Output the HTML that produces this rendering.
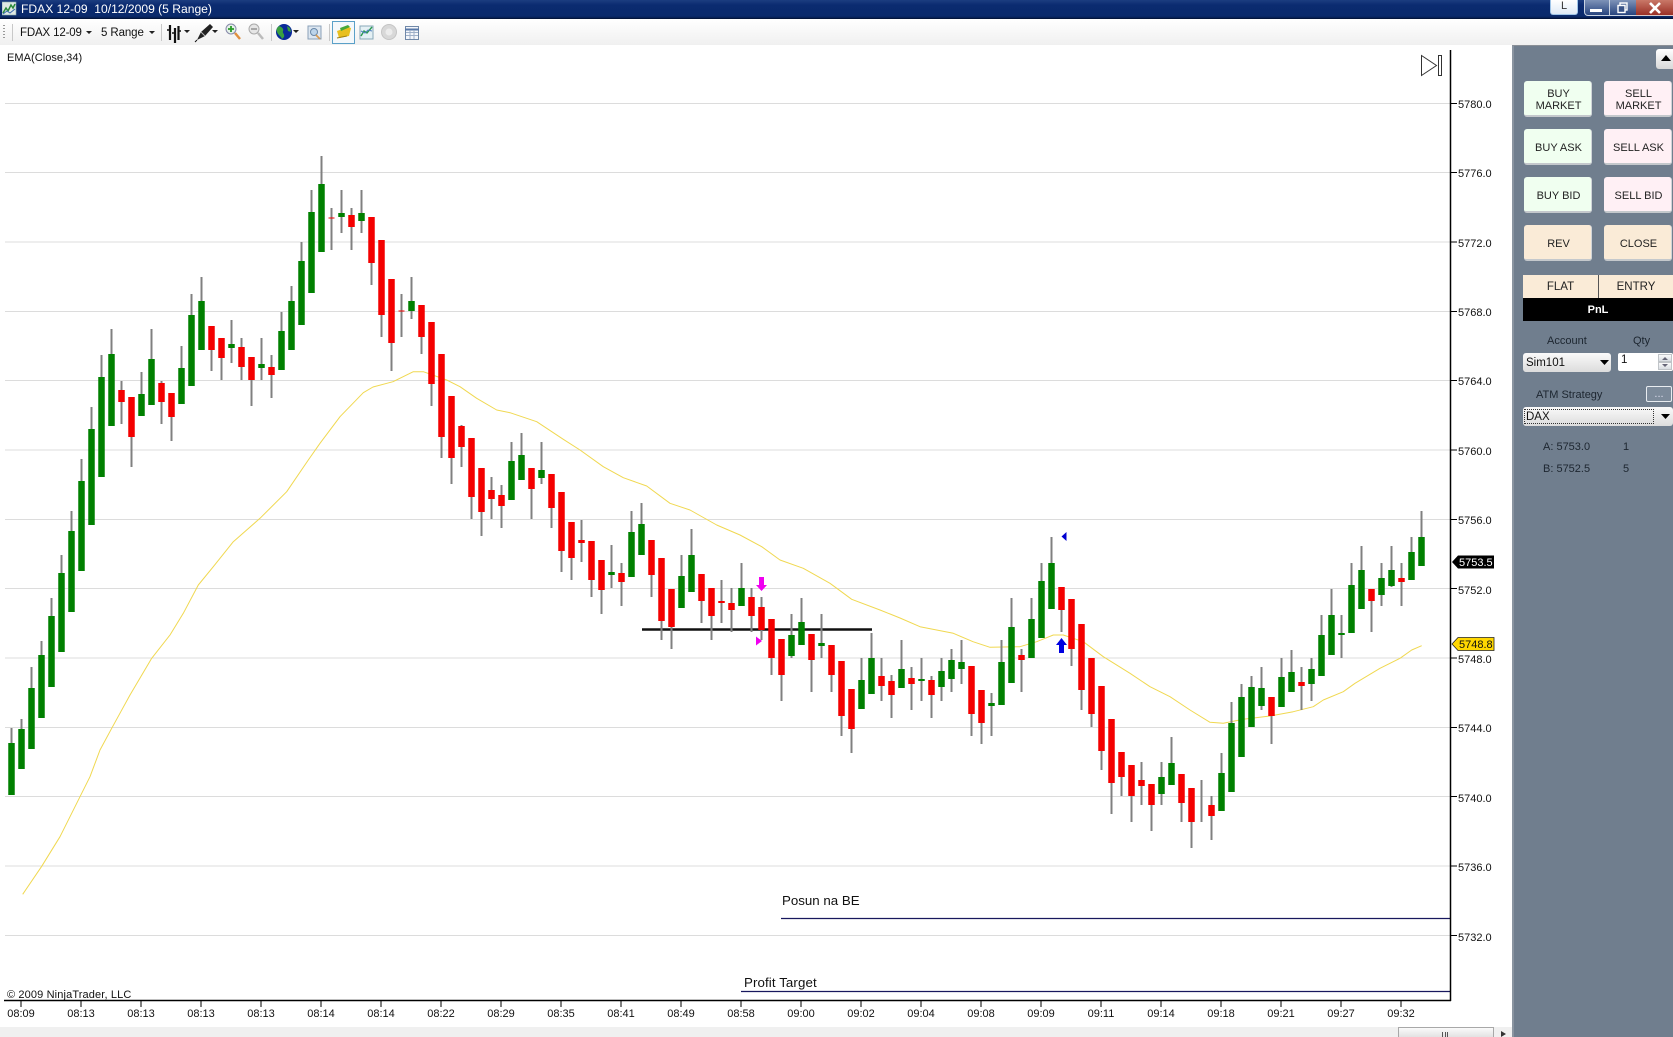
<!DOCTYPE html>
<html><head><meta charset="utf-8"><title>FDAX 12-09</title>
<style>
html,body{margin:0;padding:0;width:1673px;height:1037px;overflow:hidden;background:#fff;font-family:"Liberation Sans",sans-serif;font-size:11px;color:#111}
.a{position:absolute;box-sizing:border-box;white-space:nowrap}
.title{left:0;top:0;width:1673px;height:19px;background:linear-gradient(#1c3d80 0,#0b2b70 5px,#0a2a6c 16px,#041c50 18px);border-bottom:1px solid #03153c}
.tb{left:0;top:19px;width:1512px;height:26px;background:linear-gradient(#fff,#f0f0f0)}
.tbr{left:1512px;top:19px;width:161px;height:26px;background:linear-gradient(#fff,#f0f0f0)}
.panel{left:1512px;top:45px;width:161px;height:992px;background:#707e8e;border-left:2px solid #8a94a0;border-top:1px solid #8a8f96}
.btn{width:68px;height:36px;border-radius:3px;text-align:center;font-size:11px;line-height:12px;display:flex;align-items:center;justify-content:center;border-bottom:2px solid #c4c8cc;border-right:1px solid #d0d4d8;color:#222;white-space:normal;padding:3px 0 0 2px}
.g{background:#f0fff0}.r{background:#fff0f5}.o{background:#faebd7}
.pt{color:#1d2630;font-size:11px}
.bot{left:0;top:1027px;width:1512px;height:10px;background:#f0f0f0}
</style></head><body>

<div class="a title"></div>
<svg class="a" style="left:2px;top:1px" width="15" height="15"><rect x="0" y="1" width="14" height="13" fill="#dfe9e4" stroke="#8aa" stroke-width=".6"/><path d="M1 12 4 7l2 3 3-6 2 3 2-4" fill="none" stroke="#2a8a3a" stroke-width="1.5"/><path d="M1 13 5 10l3 2 5-4" fill="none" stroke="#3a6ab0" stroke-width="1"/></svg>
<div class="a" style="left:21px;top:2px;color:#fff;font-size:12.1px;line-height:15px">FDAX 12-09&nbsp; 10/12/2009 (5 Range)</div>

<div class="a" style="left:1550px;top:0;width:28px;height:15px;background:linear-gradient(#fff,#dfeaf6);border:1px solid #9fc4e8;border-top:0;border-radius:0 0 3px 3px;text-align:center;font-size:11px;line-height:13px;color:#333">L</div>
<div class="a" style="left:1584px;top:0;width:26px;height:16px;background:linear-gradient(#7e93b8,#27447e);border:1px solid #c9d3e2;border-top:0;border-radius:0 0 0 4px"></div>
<div class="a" style="left:1590px;top:9px;width:12px;height:3px;background:#fff"></div>
<div class="a" style="left:1610px;top:0;width:26px;height:16px;background:linear-gradient(#7e93b8,#27447e);border-bottom:1px solid #c9d3e2"></div>
<svg class="a" style="left:1617px;top:2px" width="12" height="12"><rect x="3" y="1" width="7" height="7" fill="none" stroke="#fff" stroke-width="1.4"/><rect x="1" y="3.5" width="7" height="7" fill="#3a5488" stroke="#fff" stroke-width="1.4"/></svg>
<div class="a" style="left:1636px;top:0;width:37px;height:16px;background:linear-gradient(#c97868,#9a3026);border-bottom:1px solid #d8c8c8"></div>
<svg class="a" style="left:1648px;top:2px" width="14" height="12"><path d="M2 1 12 11M12 1 2 11" stroke="#fff" stroke-width="2.6"/></svg>

<div class="a tb"></div><div class="a tbr"></div>
<svg class="a" style="left:0;top:19px" width="460" height="26">
<path d="M4 6v1M4 9v1M4 12v1M4 15v1M4 18v1" stroke="#999" stroke-width="2"/>
<path d="M12.5 5V22M161.5 5V22M271.5 5V22M329.5 5V22" stroke="#c8c8c8"/>
<text x="20" y="17" font-size="11.5" letter-spacing="-.15" fill="#111" font-family="Liberation Sans">FDAX 12-09</text>
<text x="101" y="17" font-size="11.5" letter-spacing="-.1" fill="#111" font-family="Liberation Sans">5 Range</text>
<path d="M86 12h6l-3 3zM149 12h6l-3 3zM184 11h6l-3 3zM212 11h6l-3 3zM293 11h6l-3 3z" fill="#222"/>
<path d="M170 6V21M175 9V24M178.500 7V21" stroke="#111" stroke-width="2.200"/><path d="M167 11h3M172 14h3M178 12h3" stroke="#111" stroke-width="1.500"/>
<path d="M197 21 201 13 210 5l3 3-8 9z" fill="#222"/><path d="M195 23 197 21" stroke="#111"/><path d="M201 13l4 4" stroke="#bbb"/>
<circle cx="231" cy="10" r="5" fill="#e4f2e8" stroke="#88a" stroke-width="1"/><path d="M231 7v6M228 10h6" stroke="#2a9a2a" stroke-width="1.800"/><path d="M235 14 240 20" stroke="#e09040" stroke-width="2.500"/>
<circle cx="254" cy="10" r="5" fill="#e6e6e6" stroke="#aaa" stroke-width="1"/><path d="M251 10h6" stroke="#999" stroke-width="1.600"/><path d="M258 14 263 20" stroke="#bbb" stroke-width="2.500"/>
<circle cx="284" cy="13" r="8" fill="#0a2a9a"/><path d="M279 7c3 1 5 3 4 5s2 3 1 6l-2 2c-1-3-4-4-5-7s0-4 2-6zM287 7l3 2 1 4-3-1z" fill="#3aa040"/>
<rect x="308" y="7" width="13" height="13" fill="#dce6f0" stroke="#8aa0b8"/><circle cx="314" cy="13" r="3.500" fill="#bcd4ea" stroke="#6a88a8"/><path d="M316 16l4 4" stroke="#d89a50" stroke-width="1.600"/>
<rect x="332.500" y="2.500" width="22" height="22" fill="#f4f8fb" stroke="#5aa0c8"/>
<path d="M337 12l11-4 3 1-2 8-10 2z" fill="#e8c020"/><path d="M340 9l8-3 2 2-9 4z" fill="#48a838"/><path d="M337 19l10-2" stroke="#a08010"/>
<rect x="360" y="7" width="13" height="13" fill="#e4f0f4" stroke="#88a8b8"/><path d="M361 17l3-5 3 2 5-6" fill="none" stroke="#2a9a50" stroke-width="1.400"/><path d="M361 12l4 2 3-3 4 1" fill="none" stroke="#5080c0"/>
<circle cx="389" cy="13" r="7.500" fill="#d8d8d8" stroke="#c4c4c4"/><circle cx="389" cy="13" r="3.500" fill="#ececec"/>
<rect x="405.500" y="7.500" width="13" height="13" fill="#f4f6fa" stroke="#7088a8"/><path d="M405 10.500h14" stroke="#5878a8" stroke-width="2"/><path d="M406 13.500h12M406 16.500h12M410 11v9M414 11v9" stroke="#9fb0c8"/>
</svg>

<svg class="a" style="left:0;top:45px;overflow:visible" width="1512" height="982" viewBox="0 45 1512 982" font-family="Liberation Sans">
<g stroke="#dcdcdc" stroke-width="1"><path d="M5 103.500H1451M5 172.500H1451M5 242H1451M5 311.500H1451M5 380.500H1451M5 450H1451M5 519.500H1451M5 588.500H1451M5 658H1451M5 727.500H1451M5 796.500H1451M5 866H1451M5 935.500H1451"/></g>
<path d="M22.700 894.300 41.700 866.300 60 836.700 80 796.700 90 776.700 100 750 111.700 728.300 130 695 151.700 658.300 170 635 183.300 613.300 198.300 585 213.300 566.700 233.300 541.700 260 518.300 286.700 491.700 308.300 460 320 443.300 340 416.700 363.300 392.700 373 387 393 381.700 413.300 371.700 423.300 371.700 446.700 380 460 386.700 476.700 398.300 496.700 410 510 412.700 536.700 421.700 563.300 439.300 580 450 603.300 466.700 623.300 477.700 646.700 486 670 503.300 690 510 716.700 525 740 535 761.700 546.700 780 560 803.300 568.300 830 583.300 851.700 599.300 880 610 900 618 920 626.700 953.300 633.300 973 641.700 990 647.300 1020 646.700 1036.700 641.700 1053.300 635 1063.300 635 1083.300 641.700 1103.300 656.700 1130 673.300 1150 686.700 1170 696.700 1190 710 1210 722.300 1223.300 723.300 1243.300 719.300 1270 716 1293.300 711.700 1313.300 706.700 1323.300 700 1343.300 691.700 1355 683.300 1380 668.300 1400 658.300 1411.700 650 1421.700 645.700" fill="none" stroke="#f0d850" stroke-width="1" stroke-linejoin="round"/>
<path d="M642 629.500H872" stroke="#111" stroke-width="2.400"/>
<path fill="none" stroke="#808080" stroke-width="2" d="M11.500 728V795M21.500 719V769M31.500 667V749M41.500 641V718M51.500 598V687M61.500 555V652M71.500 511V612M81.500 459V571M91.500 407V525M101.500 355V477M111.500 329V426M121.500 381V424M131.500 397V467M141.500 372V416M151.500 329V405M161.500 381V424M171.500 393V441M181.500 346V404M191.500 294V386M201.500 277V350M211.500 326V371M221.500 338V380M231.500 320V363M241.500 338V380M251.500 357V406M261.500 338V380M271.500 355V398M281.500 312V370M291.500 286V350M301.500 242V325M311.500 190V293M321.500 156V252M331.500 208V250M341.500 190V233M351.500 208V250M361.500 190V233M371.500 217V285M381.500 240V337M391.500 279V371M401.500 294V337M411.500 277V319M421.500 305V354M431.500 322V406M441.500 354V458M451.500 396V484M461.500 425V467M471.500 438V519M481.500 468V536M491.500 477V519M501.500 485V528M511.500 442V500M521.500 433V480M531.500 468V519M541.500 442V484M551.500 474V528M561.500 492V572M571.500 522V580M581.500 520V562M591.500 541V597M601.500 560V614M611.500 545V588M621.500 563V606M631.500 511V577M641.500 503V555M651.500 540V597M661.500 558V640M671.500 589V649M681.500 555V608M691.500 529V592M701.500 574V623M711.500 588V640M721.500 580V623M731.500 588V632M741.500 563V606M751.500 588V632M761.500 597V640M771.500 619V675M781.500 639V701M791.500 614V658M801.500 598V645M811.500 634V692M821.500 614V658M831.500 645V692M841.500 661V736M851.500 689V753M861.500 658V709M871.500 633V694M881.500 658V701M891.500 675V718M901.500 640V688M911.500 667V710M921.500 658V701M931.500 676V718M941.500 658V701M951.500 649V692M961.500 640V684M971.500 666V736M981.500 690V744M991.500 693V736M1001.500 640V705M1011.500 598V683M1021.500 649V692M1031.500 598V658M1041.500 563V638M1051.500 537V609M1061.500 587V632M1071.500 599V666M1081.500 624V710M1091.500 658V727M1101.500 686V770M1111.500 719V814M1121.500 752V796M1131.500 765V822M1141.500 762V805M1151.500 784V831M1161.500 762V805M1171.500 737V785M1181.500 774V822M1191.500 788V848M1201.500 780V822M1211.500 796V840M1221.500 753V811M1231.500 702V792M1241.500 684V757M1251.500 676V727M1261.500 667V710M1271.500 697V744M1281.500 658V707M1291.500 650V692M1301.500 667V710M1311.500 658V701M1321.500 615V676M1331.500 589V655M1341.500 615V658M1351.500 563V633M1361.500 546V609M1371.500 589V632M1381.500 563V606M1391.500 546V587M1401.500 563V606M1411.500 537V580M1421.500 511V566"/>
<path fill="none" stroke="#008000" stroke-width="6.500" d="M11.500 743V795M21.500 729V769M31.500 688V749M41.500 655V718M51.500 616V687M61.500 573V652M71.500 531V612M81.500 481V571M91.500 429V525M101.500 377V477M111.500 354V426M141.500 394V416M151.500 359V405M181.500 368V404M191.500 315V386M201.500 301V350M231.500 344V348M261.500 364V368M281.500 331V370M291.500 301V350M301.500 261V325M311.500 212V293M321.500 184V252M341.500 213V217M361.500 213V221M411.500 301V311M511.500 461V500M521.500 455V480M541.500 470V478M611.500 572V575M631.500 532V577M641.500 524V555M681.500 576V608M691.500 555V592M741.500 588V606M791.500 635V656M801.500 622V645M821.500 643V646M861.500 680V709M871.500 658V694M901.500 669V688M921.500 679V681M941.500 671V687M951.500 660V679M961.500 662V669M991.500 703V706M1001.500 662V705M1011.500 627V683M1031.500 619V658M1041.500 581V638M1051.500 563V609M1161.500 777V794M1171.500 763V785M1221.500 773V811M1231.500 723V792M1241.500 697V757M1251.500 687V727M1261.500 688V706M1281.500 677V707M1291.500 672V692M1311.500 669V684M1321.500 635V676M1331.500 615V655M1341.500 633V635M1351.500 585V633M1361.500 570V609M1381.500 578V595M1391.500 570V586M1411.500 552V580M1421.500 537V566"/>
<path fill="none" stroke="#f40000" stroke-width="6.500" d="M121.500 390V402M131.500 397V437M161.500 383V402M171.500 393V417M211.500 326V350M221.500 338V358M241.500 347V367M251.500 357V380M271.500 367V375M351.500 215V227M371.500 217V263M381.500 240V315M391.500 279V343M421.500 305V337M431.500 322V384M441.500 354V437M451.500 396V458M461.500 426V447M471.500 438V497M481.500 468V512M491.500 490V499M501.500 495V506M531.500 468V489M551.500 474V508M561.500 492V551M571.500 522V558M581.500 540V543M591.500 541V580M601.500 560V590M621.500 573V582M651.500 540V575M661.500 558V621M671.500 589V627M701.500 574V601M711.500 588V616M721.500 601V603M731.500 603V610M751.500 597V616M761.500 607V630M771.500 619V658M781.500 639V675M811.500 634V660M831.500 645V675M841.500 661V716M851.500 689V729M881.500 676V686M891.500 681V695M911.500 678V684M931.500 680V695M971.500 666V714M981.500 690V723M1021.500 655V660M1061.500 587V610M1071.500 599V649M1081.500 624V690M1091.500 658V714M1101.500 686V751M1111.500 719V783M1121.500 752V777M1131.500 765V796M1141.500 780V786M1151.500 784V805M1181.500 774V803M1191.500 788V822M1211.500 805V816M1271.500 697V716M1301.500 682V686M1371.500 589V601M1401.500 578V582"/>
<path d="M328.500 218h6M398.500 311h6" stroke="#f40000" stroke-width="1"/>
<path d="M759 577h5v8h3l-5.500 6-5.500-6h3z" fill="#f000f0"/>
<path d="M756 636.500 762 641 756 645.500z" fill="#f000f0"/>
<path d="M1059 653v-8h-3l5.500-7 5.500 7h-3v8z" fill="#0000e0"/>
<path d="M1066.500 532v9l-5-4.500z" fill="#0000d0"/>
<path d="M781 918.500H1450M741 991.500H1450" stroke="#18185e" stroke-width="1.300"/>
<text x="782" y="905" font-size="13.300" fill="#111">Posun na BE</text>
<text x="744" y="987" font-size="13.300" letter-spacing=".1" fill="#111">Profit Target</text>
<text x="7" y="998" font-size="11" letter-spacing=".13" fill="#111">© 2009 NinjaTrader, LLC</text>
<text x="7" y="61" font-size="11" letter-spacing=".05" fill="#111">EMA(Close,34)</text>
<path d="M1450.500 50V1001M4 1000.500H1451" stroke="#000" stroke-width="1.500" fill="none"/>
<path d="M1451 103.500h6M1451 172.500h6M1451 242h6M1451 311.500h6M1451 380.500h6M1451 450h6M1451 519.500h6M1451 588.500h6M1451 658h6M1451 727.500h6M1451 796.500h6M1451 866h6M1451 935.500h6" stroke="#000"/>
<path d="M21 1000v7M81 1000v7M141 1000v7M201 1000v7M261 1000v7M321 1000v7M381 1000v7M441 1000v7M501 1000v7M561 1000v7M621 1000v7M681 1000v7M741 1000v7M801 1000v7M861 1000v7M921 1000v7M981 1000v7M1041 1000v7M1101 1000v7M1161 1000v7M1221 1000v7M1281 1000v7M1341 1000v7M1401 1000v7" stroke="#000"/>
<g font-size="11" fill="#111">
<text x="1458" y="108">5780.0</text><text x="1458" y="177">5776.0</text><text x="1458" y="247">5772.0</text><text x="1458" y="316">5768.0</text><text x="1458" y="385">5764.0</text><text x="1458" y="455">5760.0</text><text x="1458" y="524">5756.0</text><text x="1458" y="594">5752.0</text><text x="1458" y="663">5748.0</text><text x="1458" y="732">5744.0</text><text x="1458" y="802">5740.0</text><text x="1458" y="871">5736.0</text><text x="1458" y="941">5732.0</text>
</g>
<g font-size="11" fill="#111" text-anchor="middle">
<text x="21" y="1017">08:09</text><text x="81" y="1017">08:13</text><text x="141" y="1017">08:13</text><text x="201" y="1017">08:13</text><text x="261" y="1017">08:13</text><text x="321" y="1017">08:14</text><text x="381" y="1017">08:14</text><text x="441" y="1017">08:22</text><text x="501" y="1017">08:29</text><text x="561" y="1017">08:35</text><text x="621" y="1017">08:41</text><text x="681" y="1017">08:49</text><text x="741" y="1017">08:58</text><text x="801" y="1017">09:00</text><text x="861" y="1017">09:02</text><text x="921" y="1017">09:04</text><text x="981" y="1017">09:08</text><text x="1041" y="1017">09:09</text><text x="1101" y="1017">09:11</text><text x="1161" y="1017">09:14</text><text x="1221" y="1017">09:18</text><text x="1281" y="1017">09:21</text><text x="1341" y="1017">09:27</text><text x="1401" y="1017">09:32</text>
</g>
<path d="M1452 562 1458 555.500H1494V568.500H1458z" fill="#000"/>
<text x="1459" y="566" font-size="11" fill="#fff">5753.5</text>
<path d="M1452 644 1458 637.500H1494V650.500H1458z" fill="#ffd700" stroke="#222" stroke-width=".8"/>
<text x="1459" y="648" font-size="11" fill="#111">5748.8</text>
<path d="M1421.500 55.500V75.500L1436.500 65.500z" fill="#fff" stroke="#333"/>
<rect x="1438.500" y="55.500" width="3" height="20" fill="#fff" stroke="#333"/>
</svg>

<div class="a bot"></div>
<div class="a" style="left:1398px;top:1027px;width:96px;height:10px;background:linear-gradient(#fafafa,#e2e2e2);border:1px solid #a8a8a8;border-bottom:0"></div>
<div class="a" style="left:1442px;top:1032px;width:6px;height:5px;border-left:1px solid #555;border-right:1px solid #555"><div style="width:1px;height:5px;background:#555;margin-left:2px"></div></div>
<svg class="a" style="left:1500px;top:1031px" width="8" height="6"><path d="M1 0 6 3 1 6z" fill="#333"/></svg>

<div class="a panel"></div>
<div class="a" style="left:1656px;top:49px;width:17px;height:20px;background:linear-gradient(#fff,#d8d8d8);border-radius:3px 0 0 3px"></div>
<svg class="a" style="left:1660px;top:54px" width="12" height="8"><path d="M1 7 6 1l5 6z" fill="#000"/></svg>

<div class="a btn g" style="left:1524px;top:81px">BUY<br>MARKET</div>
<div class="a btn r" style="left:1604px;top:81px">SELL<br>MARKET</div>
<div class="a btn g" style="left:1524px;top:129px">BUY ASK</div>
<div class="a btn r" style="left:1604px;top:129px">SELL ASK</div>
<div class="a btn g" style="left:1524px;top:177px">BUY BID</div>
<div class="a btn r" style="left:1604px;top:177px">SELL BID</div>
<div class="a btn o" style="left:1524px;top:225px">REV</div>
<div class="a btn o" style="left:1604px;top:225px">CLOSE</div>

<div class="a o" style="left:1523px;top:275px;width:76px;height:23px;border-right:1px solid #555;text-align:center;line-height:25px;font-size:11.5px;color:#222">FLAT</div>
<div class="a o" style="left:1599px;top:275px;width:74px;height:23px;text-align:center;line-height:25px;font-size:11.5px;color:#222">ENTRY</div>
<div class="a" style="left:1523px;top:298px;width:150px;height:23px;background:#000;color:#fff;font-weight:bold;text-align:center;line-height:25px;font-size:11px">PnL</div>

<div class="a pt" style="left:1547px;top:335px">Account</div>
<div class="a pt" style="left:1633px;top:335px">Qty</div>
<div class="a" style="left:1523px;top:353px;width:88px;height:19px;background:linear-gradient(#fafafa,#dcdcdc);border-radius:3px;font-size:11.5px;line-height:20px;padding-left:3px;color:#111">Sim101</div>
<svg class="a" style="left:1600px;top:360px" width="10" height="6"><path d="M0 0h9L4.500 5z" fill="#000"/></svg>
<div class="a" style="left:1618px;top:353px;width:55px;height:18px;background:#fff;border-radius:2px;font-size:11.5px;line-height:15px;padding-left:3px;color:#111">1</div>
<div class="a" style="left:1658px;top:354px;width:14px;height:8px;background:linear-gradient(#fbfbfb,#d8dde2);border:1px solid #c0c4c8"></div>
<div class="a" style="left:1658px;top:362px;width:14px;height:8px;background:linear-gradient(#fbfbfb,#d8dde2);border:1px solid #c0c4c8"></div>
<svg class="a" style="left:1661px;top:355px" width="8" height="15"><path d="M1 5 4 2l3 3zM1 9l3 3 3-3z" fill="#667"/></svg>
<div class="a pt" style="left:1536px;top:389px">ATM Strategy</div>
<div class="a" style="left:1646px;top:386px;width:26px;height:16px;background:#7c8a9a;border:1px solid #e8ecf0;border-radius:2px;text-align:center;color:#dde;font-size:11px;line-height:15px">...</div>
<div class="a" style="left:1523px;top:407px;width:150px;height:19px;background:linear-gradient(#fafafa,#dcdcdc);border-radius:3px"></div>
<div class="a" style="left:1524px;top:409px;width:130px;height:15px;border:1px dotted #333;font-size:11.5px;line-height:14px;padding-left:1px;color:#111">DAX</div>
<svg class="a" style="left:1661px;top:414px" width="10" height="6"><path d="M0 0h9L4.500 5z" fill="#000"/></svg>
<div class="a pt" style="left:1543px;top:441px">A: 5753.0</div>
<div class="a pt" style="left:1623px;top:441px">1</div>
<div class="a pt" style="left:1543px;top:463px">B: 5752.5</div>
<div class="a pt" style="left:1623px;top:463px">5</div>
</body></html>
